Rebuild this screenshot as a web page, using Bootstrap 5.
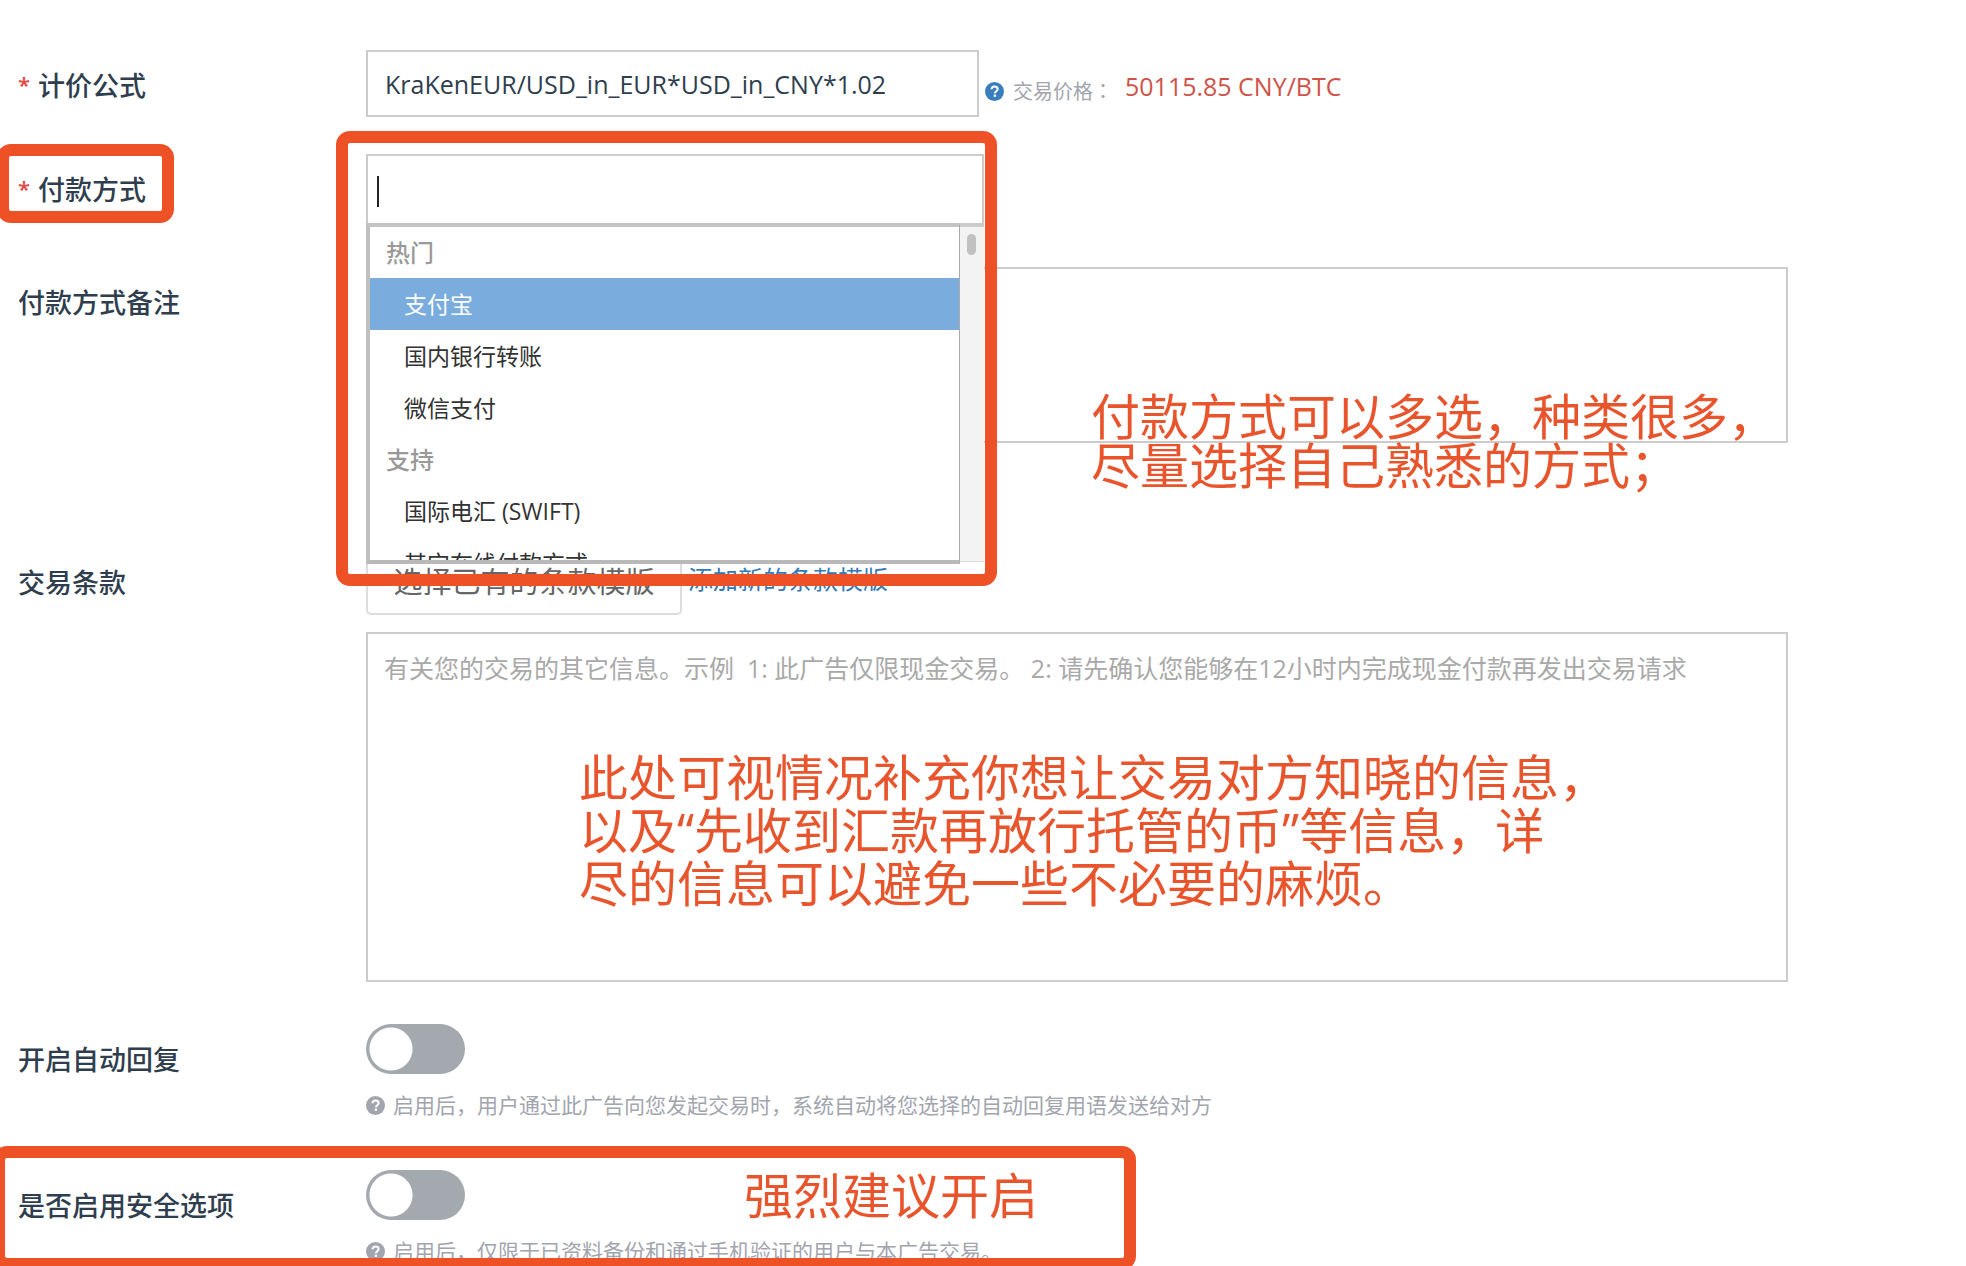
<!DOCTYPE html>
<html lang="zh-CN">
<head>
<meta charset="utf-8">
<meta name="viewport" content="width=device-width, initial-scale=1">
<title>发布广告</title>
<link href="https://cdn.jsdelivr.net/npm/bootstrap@5.3.0/dist/css/bootstrap.min.css" rel="stylesheet">
<style>
  :root { --ink: #2f3e4e; --line: #ccc; --muted: #a2a5ae; --note: #ef5127; }
  body { font-family: "Open Sans", "Noto Sans CJK SC", sans-serif; color: var(--ink); background: #fff; }
  .ad-form { padding: 50px 178px 0 0; }
  .field { position: relative; display: flex; }
  .field-name { flex: 0 0 366px; padding-left: 18px; font-size: 27px; line-height: 72px; font-weight: 500; }
  .required { display: inline-block; width: 20px; font-size: 22px; line-height: 30px; vertical-align: 3px; color: #e2483d; font-weight: 600; }
  .field-body { flex: 1 1 0; min-width: 0; }
  .box.form-control { border: 2px solid var(--line); border-radius: 0; padding: 16px; font-size: 25px; line-height: 36px; color: var(--ink); resize: none; background: #fff; }
  .box.form-control::placeholder { color: #a9a9a9; opacity: 1; }
  .formula.form-control { width: 613px; height: 67px; padding: 12px 17px; }
  .hint { font-size: 21px; line-height: 30px; color: var(--muted); }
  .hint svg, .price svg { flex: none; width: 19px; height: 19px; }
  .price { padding-left: 6px; }
  .price-name { gap: 9px; width: 140px; padding-top: 10px; font-size: 20px; line-height: 30px; color: var(--muted); }
  .colon { font-family: "Noto Sans CJK JP", sans-serif; }
  .price-value { font-size: 25px; line-height: 36px; color: #cf5349; }
  .picker { position: relative; width: 618px; }
  .picker-input.form-control { height: 71px; }
  .caret { position: absolute; left: 11px; top: 22px; width: 2px; height: 31px; background: #222; }
  .menu { position: absolute; z-index: 2; left: 0; top: 69px; width: 618px; height: 341px; display: flex; }
  .menu .list-group { flex: 1; overflow: hidden; border-radius: 0; background: #fff; border: solid #bbb; border-width: 4px 1px 4px 4px; border-color: #c4c4c4 #aaa #b9b9b9 #c0c0c0; }
  .menu .list-group-item { flex: none; border: 0; border-radius: 0; padding: 0 0 0 34px; height: 52px; line-height: 52px; font-size: 23px; color: #333; background: transparent; text-align: left; }
  .menu .list-group-item.active { background: #7aaddd; color: #fff; margin: 0; }
  .menu .group-name { flex: none; height: 51px; line-height: 52px; padding-left: 16px; font-size: 24px; font-weight: 500; color: #999; }
  .track { width: 24px; margin: 2px 0; background: #f3f3f3; border-top: 2px solid #ccc; border-bottom: 1px solid #ddd; padding: 7px 8px 0 7px; }
  .thumb { width: 9px; height: 21px; border-radius: 5px; background: #c1c1c1; }
  .tpl.btn { width: 316px; height: 68px; padding: 2px 0 0; border: 2px solid #ddd; border-radius: 5px; font-size: 29px; line-height: 62px; color: #666; background: #fff; }
  .tpl-link { font-size: 25px; line-height: 64px; color: #337ab7; text-decoration: none; }
  .switch.form-check-input { display: block; float: none; margin: 0; width: 99px; height: 50px; border: 0; border-radius: 25px; background-color: #a4a8af; background-size: auto; background-position: 0 0; background-image: radial-gradient(circle at 25px 25px, #fff 21px, transparent 22px); }
  .switch.form-check-input:checked { background-color: #337ab7; background-image: radial-gradient(circle at 75px 25px, #fff 21px, transparent 22px); }
  .frame { position: absolute; z-index: 3; border: 12px solid var(--note); border-radius: 14px; pointer-events: none; }
  .frame-name { left: -3px; top: -10px; width: 177px; height: 79px; }
  .frame-picker { left: 336px; top: -23px; width: 661px; height: 455px; }
  .frame-safe { left: -7px; top: -24px; width: 1143px; bottom: -4px; }
  .note { position: absolute; z-index: 1; margin: 0; font-size: 49px; color: #e8552d; white-space: nowrap; pointer-events: none; }
  .note-pay { left: 1091px; top: 125px; line-height: 49px; }
  .note-terms { left: 579px; top: 204px; line-height: 53px; }
  .note-safe { left: 744px; top: -1px; line-height: 53px; }
</style>
</head>
<body>
<svg class="d-none" aria-hidden="true">
  <symbol id="q" viewBox="0 0 20 20">
    <circle cx="10" cy="10" r="10" fill="currentColor"/>
    <path d="M6.9 7.7C7 5.6 8.3 4.7 10.1 4.7c1.9 0 3.2 1 3.2 2.7 0 2.2-2.9 2.4-2.9 4.4" fill="none" stroke="#fff" stroke-width="2.2"/>
    <rect x="9.2" y="13.2" width="2.4" height="2.4" fill="#fff"/>
  </symbol>
</svg>
<form class="ad-form position-relative overflow-hidden min-vh-100">
  <div class="field" style="margin-bottom:32px">
    <label class="field-name" for="formula"><span class="required">*</span>计价公式</label>
    <div class="field-body d-flex">
      <input id="formula" class="form-control box formula" type="text" value="KraKenEUR/USD_in_EUR*USD_in_CNY*1.02">
      <div class="price d-flex align-items-center">
        <div class="price-name d-flex align-items-center">
          <svg style="color:#3a7fbd"><use href="#q"/></svg>
          <span>交易价格<span class="colon" lang="ja">：</span></span>
        </div>
        <span class="price-value">50115.85 CNY/BTC</span>
      </div>
    </div>
  </div>

  <div class="field" style="margin-bottom:41px">
    <label class="field-name" for="pay"><span class="required">*</span>付款方式</label>
    <div class="field-body">
      <div class="picker">
        <input id="pay" class="form-control box picker-input" type="text" role="combobox" aria-expanded="true" aria-controls="pay-list">
        <span class="caret"></span>
        <div class="menu">
          <div class="list-group" id="pay-list" role="listbox">
            <div class="group-name">热门</div>
            <button type="button" role="option" class="list-group-item active">支付宝</button>
            <button type="button" role="option" class="list-group-item">国内银行转账</button>
            <button type="button" role="option" class="list-group-item">微信支付</button>
            <div class="group-name">支持</div>
            <button type="button" role="option" class="list-group-item">国际电汇 (SWIFT)</button>
            <button type="button" role="option" class="list-group-item">其它在线付款方式</button>
          </div>
          <div class="track"><div class="thumb"></div></div>
        </div>
      </div>
    </div>
    <div class="frame frame-name"></div>
    <div class="frame frame-picker"></div>
  </div>

  <div class="field" style="margin-bottom:104px">
    <label class="field-name" for="remark">付款方式备注</label>
    <div class="field-body"><textarea id="remark" class="form-control box d-block" style="height:176px"></textarea></div>
    <p class="note note-pay">付款方式可以多选，种类很多，<br>尽量选择自己熟悉的方式；</p>
  </div>

  <div class="field" style="margin-bottom:42px">
    <label class="field-name" for="terms">交易条款</label>
    <div class="field-body">
      <div class="d-flex" style="gap:6px;margin-bottom:17px">
        <button type="button" class="btn tpl">选择已有的条款模版</button>
        <a class="tpl-link" href="#">添加新的条款模版</a>
      </div>
      <textarea id="terms" class="form-control box d-block" style="height:350px" placeholder="有关您的交易的其它信息。示例  1: 此广告仅限现金交易。 2: 请先确认您能够在12小时内完成现金付款再发出交易请求"></textarea>
    </div>
    <p class="note note-terms">此处可视情况补充你想让交易对方知晓的信息，<br>以及“先收到汇款再放行托管的币”等信息，详<br>尽的信息可以避免一些不必要的麻烦。</p>
  </div>

  <div class="field" style="margin-bottom:50px">
    <label class="field-name" for="auto">开启自动回复</label>
    <div class="field-body">
      <input id="auto" class="form-check-input switch" type="checkbox" role="switch">
      <div class="hint d-flex align-items-center gap-2 mt-3"><svg><use href="#q"/></svg>启用后，用户通过此广告向您发起交易时，系统自动将您选择的自动回复用语发送给对方</div>
    </div>
  </div>

  <div class="field">
    <label class="field-name" for="safe">是否启用安全选项</label>
    <div class="field-body">
      <input id="safe" class="form-check-input switch" type="checkbox" role="switch">
      <div class="hint d-flex align-items-center gap-2 mt-3"><svg><use href="#q"/></svg>启用后，仅限于已资料备份和通过手机验证的用户与本广告交易。</div>
    </div>
    <div class="frame frame-safe"></div>
    <p class="note note-safe">强烈建议开启</p>
  </div>
</form>
<script src="https://cdn.jsdelivr.net/npm/bootstrap@5.3.0/dist/js/bootstrap.bundle.min.js"></script>
</body>
</html>
